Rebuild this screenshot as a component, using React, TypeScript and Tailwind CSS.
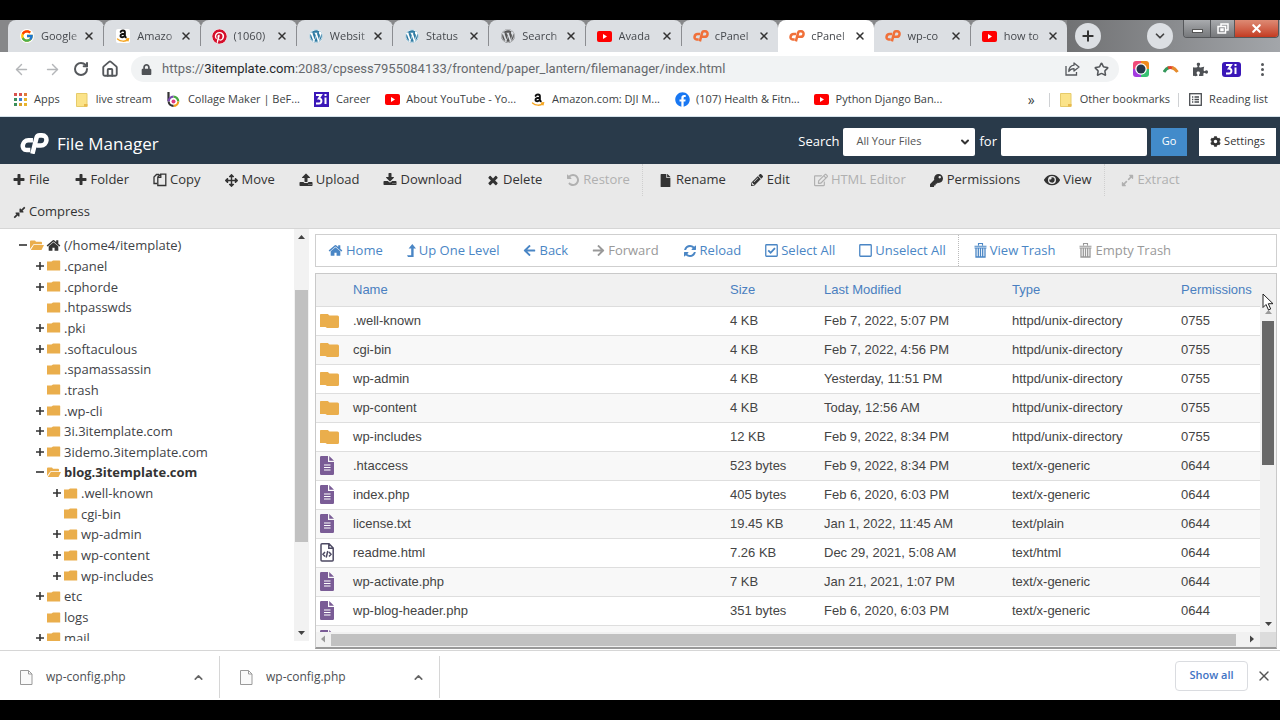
import type { ReactNode } from "react";
import { ArrowLeft, ArrowRight, ChevronDown, ChevronUp, House, Plus, RotateCw, Star, X } from "lucide-react";
import {
  FaArrowLeft,
  FaArrowRight,
  FaArrowsAlt,
  FaCog,
  FaCompressAlt,
  FaExpandAlt,
  FaEye,
  FaFacebook,
  FaFile,
  FaKey,
  FaLock,
  FaPencilAlt,
  FaPinterest,
  FaPuzzlePiece,
  FaRegEdit,
  FaWordpress,
} from "react-icons/fa";
import { FcGoogle } from "react-icons/fc";

const paths = {
  plus: "M1600 736v192q0 40-28 68t-68 28h-416v416q0 40-28 68t-68 28h-192q-40 0-68-28t-28-68v-416h-416q-40 0-68-28t-28-68v-192q0-40 28-68t68-28h416v-416q0-40 28-68t68-28h192q40 0 68 28t28 68v416h416q40 0 68 28t28 68z",
  times:
    "M1490 1322q0 40-28 68l-136 136q-28 28-68 28t-68-28l-294-294-294 294q-28 28-68 28t-68-28l-136-136q-28-28-28-68t28-68l294-294-294-294q-28-28-28-68t28-68l136-136q28-28 68-28t68 28l294 294 294-294q28-28 68-28t68 28l136 136q28 28 28 68t-28 68l-294 294 294 294q28 28 28 68z",
  home: "M1472 992v480q0 26-19 45t-45 19h-384v-384h-256v384h-384q-26 0-45-19t-19-45v-480q0-1 .5-3t.5-3l575-474 575 474q1 2 1 6zm223-69l-62 74q-8 9-21 11h-3q-13 0-21-7l-692-577-692 577q-12 8-24 7-13-2-21-11l-62-74q-8-10-7-23.5t11-21.5l719-599q32-26 76-26t76 26l244 204v-195q0-14 9-23t23-9h192q14 0 23 9t9 23v408l219 182q10 8 11 21.5t-7 23.5z",
  upload:
    "M1344 1472q0-26-19-45t-45-19-45 19-19 45 19 45 45 19 45-19 19-45zm256 0q0-26-19-45t-45-19-45 19-19 45 19 45 45 19 45-19 19-45zm128-224v320q0 40-28 68t-68 28h-1472q-40 0-68-28t-28-68v-320q0-40 28-68t68-28h427q21 56 70.5 92t110.5 36h256q61 0 110.5-36t70.5-92h427q40 0 68 28t28 68zm-325-648q-17 40-59 40h-256v448q0 26-19 45t-45 19h-256q-26 0-45-19t-19-45v-448h-256q-42 0-59-40-17-39 14-69l448-448q18-19 45-19t45 19l448 448q31 30 14 69z",
  download:
    "M1344 1344q0-26-19-45t-45-19-45 19-19 45 19 45 45 19 45-19 19-45zm256 0q0-26-19-45t-45-19-45 19-19 45 19 45 45 19 45-19 19-45zm128-224v320q0 40-28 68t-68 28h-1472q-40 0-68-28t-28-68v-320q0-40 28-68t68-28h465l135 136q58 56 136 56t136-56l136-136h464q40 0 68 28t28 68zm-325-569q17 41-14 70l-448 448q-18 19-45 19t-45-19l-448-448q-31-29-14-70 17-39 59-39h256v-448q0-26 19-45t45-19h256q26 0 45 19t19 45v448h256q42 0 59 39z",
  refresh:
    "M1639 1056q0 5-1 7-64 268-268 434.5t-478 166.5q-146 0-282.5-55t-243.5-157l-129 129q-19 19-45 19t-45-19-19-45v-448q0-26 19-45t45-19h448q26 0 45 19t19 45-19 45l-137 137q71 66 161 102t187 36q134 0 250-65t186-179q11-17 53-117 8-23 30-23h192q13 0 22.5 9.5t9.5 22.5zm25-800v448q0 26-19 45t-45 19h-448q-26 0-45-19t-19-45 19-45l138-138q-148-137-349-137-134 0-250 65t-186 179q-11 17-53 117-8 23-30 23h-199q-13 0-22.5-9.5t-9.5-22.5v-7q65-268 270-434.5t480-166.5q146 0 284 55.5t245 156.5l130-129q19-19 45-19t45 19 19 45z",
  undo: "M1664 896q0 156-61 298t-164 245-245 164-298 61q-172 0-327-72.5t-264-204.5q-7-10-6.5-22.5t8.5-20.5l137-138q10-9 25-9 16 2 23 12 73 95 179 147t225 52q104 0 198.5-40.5t163.5-109.5 109.5-163.5 40.5-198.5-40.5-198.5-109.5-163.5-163.5-109.5-198.5-40.5q-98 0-188 35.5t-160 101.5l137 138q31 30 14 69-17 40-59 40h-448q-26 0-45-19t-19-45v-448q0-42 40-59 39-17 69 14l130 129q107-101 244.5-156.5t284.5-55.5q156 0 298 61t245 164 164 245 61 298z",
};

function Glyph({ name, size = 14 }: { name: keyof typeof paths; size?: number }) {
  return (
    <svg width={size} height={size} viewBox="0 0 1792 1792" fill="currentColor" aria-hidden="true">
      <path d={paths[name]} />
    </svg>
  );
}

function CopyIcon() {
  return (
    <svg width="14" height="14" viewBox="0 0 14 14" fill="none" stroke="currentColor" strokeWidth="1.3" aria-hidden="true">
      <path d="M4 10.5H1V4l2.5-2.5H6" />
      <path d="M7.5 1.2h5.3v11.3H4.8V4zM7.8 1.4v3H5" />
    </svg>
  );
}

function LevelUp() {
  return (
    <svg width="9" height="14" viewBox="0 0 9 14" fill="currentColor" aria-hidden="true">
      <path d="M5.3 0 9 4.6H6.6V13H1L0 11.2h4.2V4.6H1.6z" />
    </svg>
  );
}

function CheckBoxIcon({ checked = false }: { checked?: boolean }) {
  return (
    <svg width="13" height="13" viewBox="0 0 12 12" fill="none" stroke="currentColor" strokeWidth="1.2" aria-hidden="true">
      <rect x=".7" y=".7" width="10.6" height="10.6" rx=".6" />
      {checked && <path d="m3 5.8 2.2 2.3L9.2 3.8" strokeWidth="1.7" />}
    </svg>
  );
}

function TrashIcon() {
  return (
    <svg width="13" height="15" viewBox="0 0 13 15" fill="none" stroke="currentColor" aria-hidden="true">
      <path d="M4.500 2.500v-2h4v2M.5 3.200h12M.5 5h12" strokeWidth="1.1" />
      <path d="M2 5v9h9V5M4.300 5v9M6.500 5v9M8.700 5v9" strokeWidth="1.300" />
    </svg>
  );
}

function CpLogo({ width = 16 }: { width?: number }) {
  return (
    <svg width={width} height={(width * 20) / 28} viewBox="0 0 28 20" fill="none" stroke="currentColor" strokeWidth="4.4" aria-hidden="true">
      <path d="M12.5 7H8c-6 0-7.6 9.5-1.5 9.5H10" />
      <path d="M12 20l4-15.5q.6-2.2 3-2.2h2.2c6.4 0 5.4 9.700-1 9.700H16" />
    </svg>
  );
}

function YouTubeLogo() {
  return (
    <svg width="15" height="11" viewBox="0 0 15 11" aria-hidden="true">
      <rect width="15" height="11" rx="2" fill="#f00" />
      <path d="m6 3 4 2.5-4 2.5z" fill="#fff" />
    </svg>
  );
}

function AmazonLogo() {
  return (
    <svg width="14" height="14" viewBox="0 0 14 14" aria-hidden="true">
      <g fill="none" strokeLinecap="round">
        <path d="M4.6 2.9C5.3.9 8.9.9 8.9 3.2v4l.9 1.100M8.800 4.800C6 4.800 4.500 5.300 4.500 6.900c0 2 3.400 1.800 4.300-.4" stroke="#111" strokeWidth="1.9" />
        <path d="M1.5 10c3 2.8 8 2.8 10.5.6M10.5 10l2-.2-.5 2" stroke="#f5a623" strokeWidth="1.4" />
      </g>
    </svg>
  );
}

function StickyNote() {
  return (
    <svg width="12" height="14" viewBox="0 0 12 14" aria-hidden="true">
      <path d="M.5.5h10.500v13H.5z" fill="#fbe389" stroke="#e6cb6a" />
      <path d="M8 11h3.500v2.500H8z" fill="#e9b94d" />
    </svg>
  );
}

function CollageLogo() {
  return (
    <svg width="13" height="15" viewBox="0 0 13 15" fill="none" strokeWidth="2.2" aria-hidden="true">
      <path d="M1.5 0v9" stroke="#333" />
      <path d="M1.6 9.5a4.8 4.8 0 0 1 4.9-4.8" stroke="#7b4ab0" />
      <path d="M6.5 4.7a4.8 4.8 0 0 1 4.8 4.8" stroke="#49a942" />
      <path d="M11.3 9.5a4.8 4.8 0 0 1-4.8 4.3" stroke="#f2a01e" />
      <path d="M6.5 13.8a4.8 4.8 0 0 1-4.9-4.3" stroke="#333" />
      <circle cx="6.5" cy="9.4" r="2" fill="#e0397c" />
    </svg>
  );
}

function CareerLogo({ rounded = false }: { rounded?: boolean }) {
  return (
    <svg width={rounded ? 19 : 15} height="15" viewBox={rounded ? "-2 0 19 15" : "0 0 15 15"} aria-hidden="true">
      <rect x={rounded ? -2 : 0} width={rounded ? 19 : 15} height="15" rx={rounded ? 3 : 0} fill="#3a17b8" />
      <path d="M2 3h5L4.8 6.5C8.5 6.5 8 11.5 5 11.5H2M11.5 5.5v6.5M11.5 2v2" fill="none" stroke="#fff" strokeWidth="2" />
    </svg>
  );
}

function ShareIcon() {
  return (
    <svg width="15" height="14" viewBox="0 0 15 14" fill="none" stroke="currentColor" strokeWidth="1.3" aria-hidden="true">
      <path d="M1 4v9h10.5V10" />
      <path d="M9 1l5 4-5 4V6.6C6.5 6.6 5 7.5 3.8 9.5 4 6 6 3.5 9 3.2z" strokeLinejoin="round" />
    </svg>
  );
}

function AppsGrid() {
  const colors = ["#d9534f", "#d9534f", "#e07b39", "#3b8f5a", "#3f7fd0", "#e9b52c", "#3b8f5a", "#d8a02a", "#e9b52c"];
  return (
    <span className="grid grid-cols-3 gap-[2px]" aria-hidden="true">
      {colors.map((c, i) => (
        <span key={i} className="size-[3px]" style={{ backgroundColor: c }} />
      ))}
    </span>
  );
}

const cpIcon = (
  <span className="text-[#f0703a]">
    <CpLogo />
  </span>
);

const tabs: { title: string; icon: ReactNode; active?: boolean; plain?: boolean }[] = [
  { title: "Google", icon: <FcGoogle size={14} className="rounded-full bg-white" /> },
  { title: "Amazo", icon: <span className="rounded-xs bg-white"><AmazonLogo /></span> },
  { title: "(1060)", icon: <FaPinterest size={15} className="rounded-full bg-white text-[#d5102c]" /> },
  { title: "Websit", icon: <FaWordpress size={14} className="rounded-full bg-white text-[#2f7ba3]" /> },
  { title: "Status", icon: <FaWordpress size={14} className="rounded-full bg-white text-[#2f7ba3]" /> },
  { title: "Search", icon: <FaWordpress size={14} className="text-[#555]" /> },
  { title: "Avada", icon: <YouTubeLogo /> },
  { title: "cPanel", icon: cpIcon, plain: true },
  { title: "cPanel", icon: cpIcon, active: true, plain: true },
  { title: "wp-co", icon: cpIcon },
  { title: "how to", icon: <YouTubeLogo />, plain: true },
];

function TabStrip() {
  return (
    <div className="flex h-8 bg-[#868789] pl-2">
      <div className="flex min-w-0 flex-1" role="tablist">
        {tabs.map((tab, i) => (
          <div
            key={i}
            className={
              tab.active
                ? "flex min-w-0 flex-1 items-center rounded-t-lg bg-white"
                : "flex min-w-0 flex-1 items-center rounded-t-lg bg-[#dcdfe3]"
            }
          >
            <div
              role="tab"
              aria-selected={!!tab.active}
              className={
                tab.plain
                  ? "flex h-5 min-w-0 flex-1 items-center pr-2 pl-[11px]"
                  : "flex h-5 min-w-0 flex-1 items-center border-r border-[#8b8d91] pr-2 pl-[11px]"
              }
            >
              <span className="flex w-4 shrink-0 justify-center">{tab.icon}</span>
              <span className="ml-[6px] min-w-0 flex-1 text-[11px] whitespace-nowrap text-[#45484d] [mask-image:linear-gradient(to_right,black_70%,transparent)]">
                {tab.title}
              </span>
              <button aria-label="Close tab" className="text-[#333]">
                <X size={12} strokeWidth={3} />
              </button>
            </div>
          </div>
        ))}
      </div>
      <div className="flex w-[213px] items-center bg-linear-to-r from-[#717274] to-[#a3a6aa] pl-2">
        <button aria-label="New tab" className="grid size-[26px] place-items-center rounded-full bg-[#dcdfe3] text-[#333]">
          <Plus size={16} strokeWidth={3} />
        </button>
        <button aria-label="Search tabs" className="ml-[46px] grid size-[26px] place-items-center rounded-full bg-[#dcdfe3] text-[#444]">
          <ChevronDown size={14} strokeWidth={3} />
        </button>
        <div className="mr-px ml-auto flex h-[18px] self-start overflow-hidden rounded-b-sm border border-t-0 border-[#55575a] text-white">
          <button aria-label="Minimize" className="flex w-[26px] items-end justify-center bg-linear-to-b from-[#a9abae] to-[#77797c] pb-1">
            <span className="h-1 w-[11px] border border-[#555] bg-white" />
          </button>
          <button aria-label="Restore window" className="grid w-[25px] place-items-center border-x border-[#55575a] bg-linear-to-b from-[#a9abae] to-[#77797c]">
            <svg width="12" height="11" viewBox="0 0 12 11" fill="none" stroke="#fff" strokeWidth="1.5">
              <path d="M4 3V1h7v6H9M1 3.5h7.5V10H1zM4 6h2v1.5H4z" />
            </svg>
          </button>
          <button aria-label="Close window" className="grid w-[43px] place-items-center bg-linear-to-b from-[#dd8a74] to-[#c33a20]">
            <X size={13} strokeWidth={4} />
          </button>
        </div>
      </div>
    </div>
  );
}

function AddressBar() {
  return (
    <div className="flex h-[34px] items-center pr-4 pl-[13px] text-[#55585c]">
      <button aria-label="Back" className="text-[#b4b6b9]">
        <ArrowLeft size={17} strokeWidth={2} />
      </button>
      <button aria-label="Forward" className="ml-[14px] text-[#b4b6b9]">
        <ArrowRight size={17} strokeWidth={2} />
      </button>
      <button aria-label="Reload page" className="ml-3">
        <RotateCw size={16} strokeWidth={3} />
      </button>
      <button aria-label="Home page" className="ml-3">
        <House size={18} strokeWidth={2.5} />
      </button>
      <div className="ml-3 flex h-[26px] flex-1 items-center rounded-full bg-[#f1f3f4] px-[10px]">
        <FaLock size={11} className="text-[#4f5256]" />
        <div className="ml-[10px] flex-1 font-[Roboto,sans-serif] text-[13px] whitespace-nowrap text-[#66696d]">
          https://<span className="text-[#26282b]">3itemplate.com</span>
          :2083/cpsess7955084133/frontend/paper_lantern/filemanager/index.html
        </div>
        <button aria-label="Share page">
          <ShareIcon />
        </button>
        <button aria-label="Bookmark page" className="ml-[14px]">
          <Star size={15} strokeWidth={2.5} />
        </button>
      </div>
      <div className="ml-[14px] flex items-center">
        <svg width="16" height="16" viewBox="0 0 16 16" aria-hidden="true">
          <path d="M3 0h5v8H0V3a3 3 0 0 1 3-3z" fill="#f04a7a" />
          <path d="M8 0h5a3 3 0 0 1 3 3v5H8z" fill="#f08a1c" />
          <path d="M16 8v5a3 3 0 0 1-3 3H8V8z" fill="#38c172" />
          <path d="M0 8h8v8H3a3 3 0 0 1-3-3z" fill="#a33be0" />
          <circle cx="8" cy="8" r="5.8" fill="#fff" />
          <circle cx="8" cy="8" r="4.5" fill="#26374a" />
        </svg>
        <svg width="16" height="9" viewBox="0 0 16 9" fill="none" strokeWidth="3" className="ml-[14px]" aria-hidden="true">
          <path d="M1 7q2-3.5 5-4.5" stroke="#34985b" />
          <path d="M5 3q2-1 5 0" stroke="#e2452e" />
          <path d="M9 2.5q3 1 5.5 4.5" stroke="#e58b2c" />
        </svg>
        <FaPuzzlePiece size={15} className="ml-[14px] text-[#4e5155]" />
        <span className="ml-[14px]">
          <CareerLogo rounded />
        </span>
        <button aria-label="Menu" className="ml-5 flex flex-col gap-[2px]">
          <span className="size-[3px] rounded-full bg-[#55585c]" />
          <span className="size-[3px] rounded-full bg-[#55585c]" />
          <span className="size-[3px] rounded-full bg-[#55585c]" />
        </button>
      </div>
    </div>
  );
}

const bookmarks = [
  { title: "Apps", icon: <AppsGrid /> },
  { title: "live stream", icon: <StickyNote /> },
  { title: "Collage Maker | BeF...", icon: <CollageLogo /> },
  { title: "Career", icon: <CareerLogo /> },
  { title: "About YouTube - Yo...", icon: <YouTubeLogo /> },
  { title: "Amazon.com: DJI M...", icon: <AmazonLogo /> },
  { title: "(107) Health & Fitn...", icon: <FaFacebook size={15} className="text-[#1877f2]" /> },
  { title: "Python Django Ban...", icon: <YouTubeLogo /> },
];

function Bookmark({ title, icon }: { title: string; icon: ReactNode }) {
  return (
    <a href="#" className="flex items-center gap-[6px] whitespace-nowrap">
      <span className="flex w-4 justify-center">{icon}</span>
      {title}
    </a>
  );
}

function BookmarksBar() {
  return (
    <div className="border-b border-[#d5e2ea] pb-[3px]">
      <div className="flex h-[27px] items-center gap-[14px] pr-3 pl-3 text-[11px] text-[#3c3f43]">
        {bookmarks.map((b) => (
          <Bookmark key={b.title} {...b} />
        ))}
        <span className="ml-auto text-sm leading-4">»</span>
        <div className="flex items-center gap-2">
          <span className="h-[14px] w-px bg-[#cfd1d4]" />
          <Bookmark title="Other bookmarks" icon={<StickyNote />} />
          <span className="h-[14px] w-px bg-[#cfd1d4]" />
          <Bookmark
            title="Reading list"
            icon={
              <svg width="13" height="13" viewBox="0 0 13 13" fill="none" stroke="#4a4d51" strokeWidth="1.3" aria-hidden="true">
                <rect x=".7" y=".7" width="11.6" height="11.6" />
                <path d="M3 4h1.3M5.5 4H10M3 6.5h1.3M5.5 6.5H10M3 9h1.3M5.5 9H10" />
              </svg>
            }
          />
        </div>
      </div>
    </div>
  );
}

function Header() {
  return (
    <header className="flex h-[47px] bg-[#293a4a] pr-1 pl-5 text-white">
      <div className="flex flex-1 items-center gap-2 pt-[6px]">
        <CpLogo width={29} />
        <h1 className="text-[17px]">File Manager</h1>
      </div>
      <form className="flex items-center pt-0.5 text-[13px]" onSubmit={(e) => e.preventDefault()}>
        <label htmlFor="scope">Search</label>
        <div className="relative ml-1">
          <select id="scope" className="block h-7 w-[132px] appearance-none rounded-xs bg-white pl-[13px] text-[11px] text-[#555]">
            <option>All Your Files</option>
          </select>
          <ChevronDown size={12} strokeWidth={4} className="pointer-events-none absolute top-2 right-1 text-[#333]" />
        </div>
        <label htmlFor="query" className="mx-1">
          for
        </label>
        <input id="query" type="text" className="h-7 w-[146px] rounded-xs bg-white px-2 text-[#555]" />
        <button className="ml-1 h-7 w-9 bg-[#428bca] text-[11px]">Go</button>
        <button type="button" className="ml-3 flex h-7 w-[77px] items-center justify-center gap-[3px] bg-white text-[11px] text-[#333]">
          <FaCog size={11} />
          Settings
        </button>
      </form>
    </header>
  );
}

type Action = { label: string; icon: ReactNode; disabled?: boolean; last?: boolean };

const actions: Action[] = [
  { label: "File", icon: <Glyph name="plus" /> },
  { label: "Folder", icon: <Glyph name="plus" /> },
  { label: "Copy", icon: <CopyIcon /> },
  { label: "Move", icon: <FaArrowsAlt size={13} /> },
  { label: "Upload", icon: <Glyph name="upload" /> },
  { label: "Download", icon: <Glyph name="download" /> },
  { label: "Delete", icon: <Glyph name="times" /> },
  { label: "Restore", icon: <Glyph name="undo" />, disabled: true, last: true },
  { label: "Rename", icon: <FaFile size={13} /> },
  { label: "Edit", icon: <FaPencilAlt size={12} /> },
  { label: "HTML Editor", icon: <FaRegEdit size={14} />, disabled: true },
  { label: "Permissions", icon: <FaKey size={13} /> },
  { label: "View", icon: <FaEye size={16} />, last: true },
  { label: "Extract", icon: <FaExpandAlt size={13} />, disabled: true },
  { label: "Compress", icon: <FaCompressAlt size={13} /> },
];

function ActionBar() {
  return (
    <div className="flex flex-wrap border-b border-[#d6d6d6] bg-[#e9e9e9]">
      {actions.map((a) => (
        <div key={a.label} className={a.last ? "mr-1 border-r border-dotted border-[#cfcfcf]" : ""}>
          <button
            disabled={a.disabled}
            className="flex h-8 items-center gap-[3px] px-3 text-[13px] whitespace-nowrap text-[#333] disabled:text-[#b0b0b0]"
          >
            <span className="flex min-w-[14px] justify-center">{a.icon}</span>
            {a.label}
          </button>
        </div>
      ))}
    </div>
  );
}

type Node = { name: string; level: number; toggle?: "+" | "-"; current?: boolean };

const tree: Node[] = [
  { name: "(/home4/itemplate)", level: 0, toggle: "-" },
  { name: ".cpanel", level: 1, toggle: "+" },
  { name: ".cphorde", level: 1, toggle: "+" },
  { name: ".htpasswds", level: 1 },
  { name: ".pki", level: 1, toggle: "+" },
  { name: ".softaculous", level: 1, toggle: "+" },
  { name: ".spamassassin", level: 1 },
  { name: ".trash", level: 1 },
  { name: ".wp-cli", level: 1, toggle: "+" },
  { name: "3i.3itemplate.com", level: 1, toggle: "+" },
  { name: "3idemo.3itemplate.com", level: 1, toggle: "+" },
  { name: "blog.3itemplate.com", level: 1, toggle: "-", current: true },
  { name: ".well-known", level: 2, toggle: "+" },
  { name: "cgi-bin", level: 2 },
  { name: "wp-admin", level: 2, toggle: "+" },
  { name: "wp-content", level: 2, toggle: "+" },
  { name: "wp-includes", level: 2, toggle: "+" },
  { name: "etc", level: 1, toggle: "+" },
  { name: "logs", level: 1 },
  { name: "mail", level: 1, toggle: "+" },
];

const indents = ["pl-[19px]", "pl-9", "pl-[53px]"];

function TreeFolder({ open }: { open: boolean }) {
  return (
    <svg width="14" height="11" viewBox="0 0 14 11" fill="#eaae4c" aria-hidden="true">
      {open ? (
        <path d="M0 9V1.5Q0 .5 1 .5h4l1 1.3h5q1 0 1 1v1.4H3.5zM3.8 5H14l-2.5 5H.8z" />
      ) : (
        <path d="M0 1.500h4.500L6 .5h6.500q.7 0 .7.7v9.300H0z" />
      )}
    </svg>
  );
}

function Tree() {
  return (
    <nav className="flex h-[412px] w-[309px] shrink-0" aria-label="Folders">
      <div className="flex-1 overflow-hidden pt-[6px]">
        <ul className="grid h-[413px] auto-rows-fr">
          {tree.map((node) => (
            <li key={node.name + node.level} className={`flex min-h-0 items-center text-[13px] text-[#3f4347] ${indents[node.level]}`}>
              <button aria-label={`Toggle ${node.name}`} className="w-[11px] shrink-0">
                {node.toggle && (
                  <svg width="8" height="8" viewBox="0 0 8 8" stroke="#333" strokeWidth="1.6" aria-hidden="true">
                    <path d={node.toggle === "+" ? "M0 4h8M4 0v8" : "M0 4h8"} />
                  </svg>
                )}
              </button>
              <TreeFolder open={node.toggle === "-"} />
              {node.level === 0 && (
                <span className="ml-[2px] text-[#333]">
                  <Glyph name="home" size={15} />
                </span>
              )}
              <a href="#" className={node.current ? "ml-[3px] leading-5 font-bold text-[#333]" : "ml-[3px] leading-5"}>
                {node.name}
              </a>
            </li>
          ))}
        </ul>
      </div>
      <div className="flex w-[15px] flex-col items-center bg-[#f2f2f2] pt-0.5">
        <Arrow dir="up" />
        <div className="mt-11 h-[252px] w-[13px] bg-[#c1c1c1]" />
        <div className="flex-1" />
        <Arrow dir="down" />
      </div>
    </nav>
  );
}

const arrows = {
  up: "M4 8l3.5-4L11 8z",
  down: "M4 5h7L7.5 9z",
  left: "M9 3.5v7L5 7z",
  right: "M5 3.5v7L9 7z",
};

function Arrow({ dir, muted = false }: { dir: keyof typeof arrows; muted?: boolean }) {
  return (
    <svg width="15" height="15" viewBox="0 0 15 15" fill={muted ? "#999" : "#444"} className="shrink-0" aria-hidden="true">
      <path d={arrows[dir]} />
    </svg>
  );
}

const navActions: Action[] = [
  { label: "Home", icon: <Glyph name="home" size={15} /> },
  { label: "Up One Level", icon: <LevelUp /> },
  { label: "Back", icon: <FaArrowLeft size={13} /> },
  { label: "Forward", icon: <FaArrowRight size={13} />, disabled: true },
  { label: "Reload", icon: <Glyph name="refresh" /> },
  { label: "Select All", icon: <CheckBoxIcon checked /> },
  { label: "Unselect All", icon: <CheckBoxIcon />, last: true },
  { label: "View Trash", icon: <TrashIcon /> },
  { label: "Empty Trash", icon: <TrashIcon />, disabled: true },
];

const files = [
  { name: ".well-known", size: "4 KB", modified: "Feb 7, 2022, 5:07 PM", type: "httpd/unix-directory", mode: "0755" },
  { name: "cgi-bin", size: "4 KB", modified: "Feb 7, 2022, 4:56 PM", type: "httpd/unix-directory", mode: "0755" },
  { name: "wp-admin", size: "4 KB", modified: "Yesterday, 11:51 PM", type: "httpd/unix-directory", mode: "0755" },
  { name: "wp-content", size: "4 KB", modified: "Today, 12:56 AM", type: "httpd/unix-directory", mode: "0755" },
  { name: "wp-includes", size: "12 KB", modified: "Feb 9, 2022, 8:34 PM", type: "httpd/unix-directory", mode: "0755" },
  { name: ".htaccess", size: "523 bytes", modified: "Feb 9, 2022, 8:34 PM", type: "text/x-generic", mode: "0644" },
  { name: "index.php", size: "405 bytes", modified: "Feb 6, 2020, 6:03 PM", type: "text/x-generic", mode: "0644" },
  { name: "license.txt", size: "19.45 KB", modified: "Jan 1, 2022, 11:45 AM", type: "text/plain", mode: "0644" },
  { name: "readme.html", size: "7.26 KB", modified: "Dec 29, 2021, 5:08 AM", type: "text/html", mode: "0644" },
  { name: "wp-activate.php", size: "7 KB", modified: "Jan 21, 2021, 1:07 PM", type: "text/x-generic", mode: "0644" },
  { name: "wp-blog-header.php", size: "351 bytes", modified: "Feb 6, 2020, 6:03 PM", type: "text/x-generic", mode: "0644" },
  { name: "", size: "", modified: "", type: "text/x-generic", mode: "" },
];

function FileIcon({ type }: { type: string }) {
  if (type === "httpd/unix-directory") {
    return (
      <svg width="19" height="14" viewBox="0 0 19 14" fill="#eaae4c" aria-hidden="true">
        <path d="M0 .8Q0 0 .8 0h7L9.500 1.500h8Q19 1.500 19 3v9.500q0 1.500-1.500 1.500H7L5.500 13H0z" />
      </svg>
    );
  }
  if (type === "text/html") {
    return (
      <svg width="14" height="19" viewBox="0 0 14 19" fill="none" stroke="#4d4a63" strokeWidth="1.5" aria-hidden="true">
        <path d="M1 1.8q0-1 1-1h7L13.2 5v12q0 1-1 1H2q-1 0-1-1zM8.8 1v4.3h4.2M5 9l-2 2.2 2 2.2M9 9l2 2.2-2 2.2M7.8 8l-1.6 6.5" />
      </svg>
    );
  }
  return (
    <svg width="14" height="19" viewBox="0 0 14 19" aria-hidden="true">
      <path d="M0 1.2Q0 0 1.2 0H8v6h6v11.8q0 1.2-1.2 1.2H1.2Q0 19 0 17.8zM9.2 0 14 4.8H9.2z" fill="#7a5c96" />
      <path d="M4 9h6.5M4 11.500h6.500M4 14h6.500" stroke="#fff" strokeWidth="1.2" />
    </svg>
  );
}

function FileTable() {
  return (
    <div className="border border-b-2 border-[#c9c9c9] border-b-[#999] bg-[#f1f1f1] font-['Liberation_Sans',sans-serif] text-[13px]">
      <div className="flex">
        <div className="h-[358px] min-w-0 flex-1 overflow-hidden">
          <table className="w-full table-fixed border-collapse text-left">
            <colgroup>
              <col className="w-[37px]" />
              <col />
              <col className="w-[94px]" />
              <col className="w-[188px]" />
              <col className="w-[169px]" />
              <col className="w-[79px]" />
            </colgroup>
            <thead>
              <tr className="h-8 border-b border-[#ddd] text-[#4a7fc0]">
                <th aria-label="Icon" />
                <th className="font-normal">Name</th>
                <th className="font-normal">Size</th>
                <th className="font-normal">Last Modified</th>
                <th className="font-normal">Type</th>
                <th className="font-normal">Permissions</th>
              </tr>
            </thead>
            <tbody>
              {files.map((f, i) => (
                <tr key={i} className="h-[29px] border-b border-[#dedede] bg-white text-[#444] even:bg-[#f8f8f8]">
                  <td className="pl-1">
                    <FileIcon type={f.type} />
                  </td>
                  <td>{f.name}</td>
                  <td>{f.size}</td>
                  <td>{f.modified}</td>
                  <td>{f.name && f.type}</td>
                  <td>{f.mode}</td>
                </tr>
              ))}
            </tbody>
          </table>
        </div>
        <div className="flex w-4 flex-col items-center pt-8">
          <Arrow dir="up" muted />
          <div className="h-[144px] w-3 bg-[#686868]" />
          <div className="flex-1" />
          <Arrow dir="down" />
        </div>
      </div>
      <div className="flex h-[15px] items-center">
        <Arrow dir="left" muted />
        <div className="h-3 flex-1 bg-[#c1c1c1]" />
        <div className="flex w-6 justify-end">
          <Arrow dir="right" />
        </div>
        <div className="h-full w-4 bg-[#dcdcdc]" />
      </div>
    </div>
  );
}

function Content() {
  return (
    <main className="ml-[6px] min-w-0 flex-1 pt-[5px] pr-[3px]">
      <div className="mb-[6px] flex h-[33px] overflow-hidden border border-[#cfcfcf]">
        {navActions.map((a) => (
          <div key={a.label} className={a.last ? "mr-[3px] flex border-r border-dotted border-[#bbb]" : "flex"}>
            <button
              disabled={a.disabled}
              className="flex items-center gap-[3px] px-3 text-[13px] whitespace-nowrap text-[#4a86c5] disabled:text-[#999]"
            >
              {a.icon}
              {a.label}
            </button>
          </div>
        ))}
      </div>
      <FileTable />
    </main>
  );
}

function DownloadItem({ name }: { name: string }) {
  return (
    <div className="mt-[5px] mb-0.5 flex w-[220px] items-center border-r border-[#d6d6d6] pr-[14px] pl-5">
      <svg width="13" height="15" viewBox="0 0 13 15" fill="#fafafa" stroke="#9a9a9a" aria-hidden="true">
        <path d="M.5.5h8L12 4v10.500H.5zM8.500.5V4H12" />
      </svg>
      <span className="ml-[13px] flex-1">{name}</span>
      <button aria-label={`Options for ${name}`} className="text-[#666]">
        <ChevronUp size={13} strokeWidth={3} />
      </button>
    </div>
  );
}

export default function App() {
  return (
    <div className="min-h-screen bg-black pt-5 font-['Open_Sans',sans-serif]">
      <div className="relative bg-white">
        <TabStrip />
        <AddressBar />
        <BookmarksBar />
        <Header />
        <ActionBar />
        <div className="flex">
          <Tree />
          <Content />
        </div>
        <footer className="mt-px flex h-[50px] border-t border-[#d6d6d6] text-xs text-[#4c4f53]">
          <DownloadItem name="wp-config.php" />
          <DownloadItem name="wp-config.php" />
          <button className="my-auto mr-2 ml-auto h-[30px] w-[73px] rounded-sm border border-[#dadce0] text-[11px] font-semibold text-[#3f73c4]">
            Show all
          </button>
          <button aria-label="Close downloads" className="mr-2 text-[#555]">
            <X size={16} strokeWidth={2} />
          </button>
        </footer>
        <svg width="12" height="18" viewBox="0 0 12 18" className="absolute top-[273px] right-[6px]" aria-hidden="true">
          <path d="M1 1v13.500l3-3 2.500 5.500 2.200-1-2.400-5.300H11z" fill="#fff" stroke="#222" />
        </svg>
      </div>
    </div>
  );
}
